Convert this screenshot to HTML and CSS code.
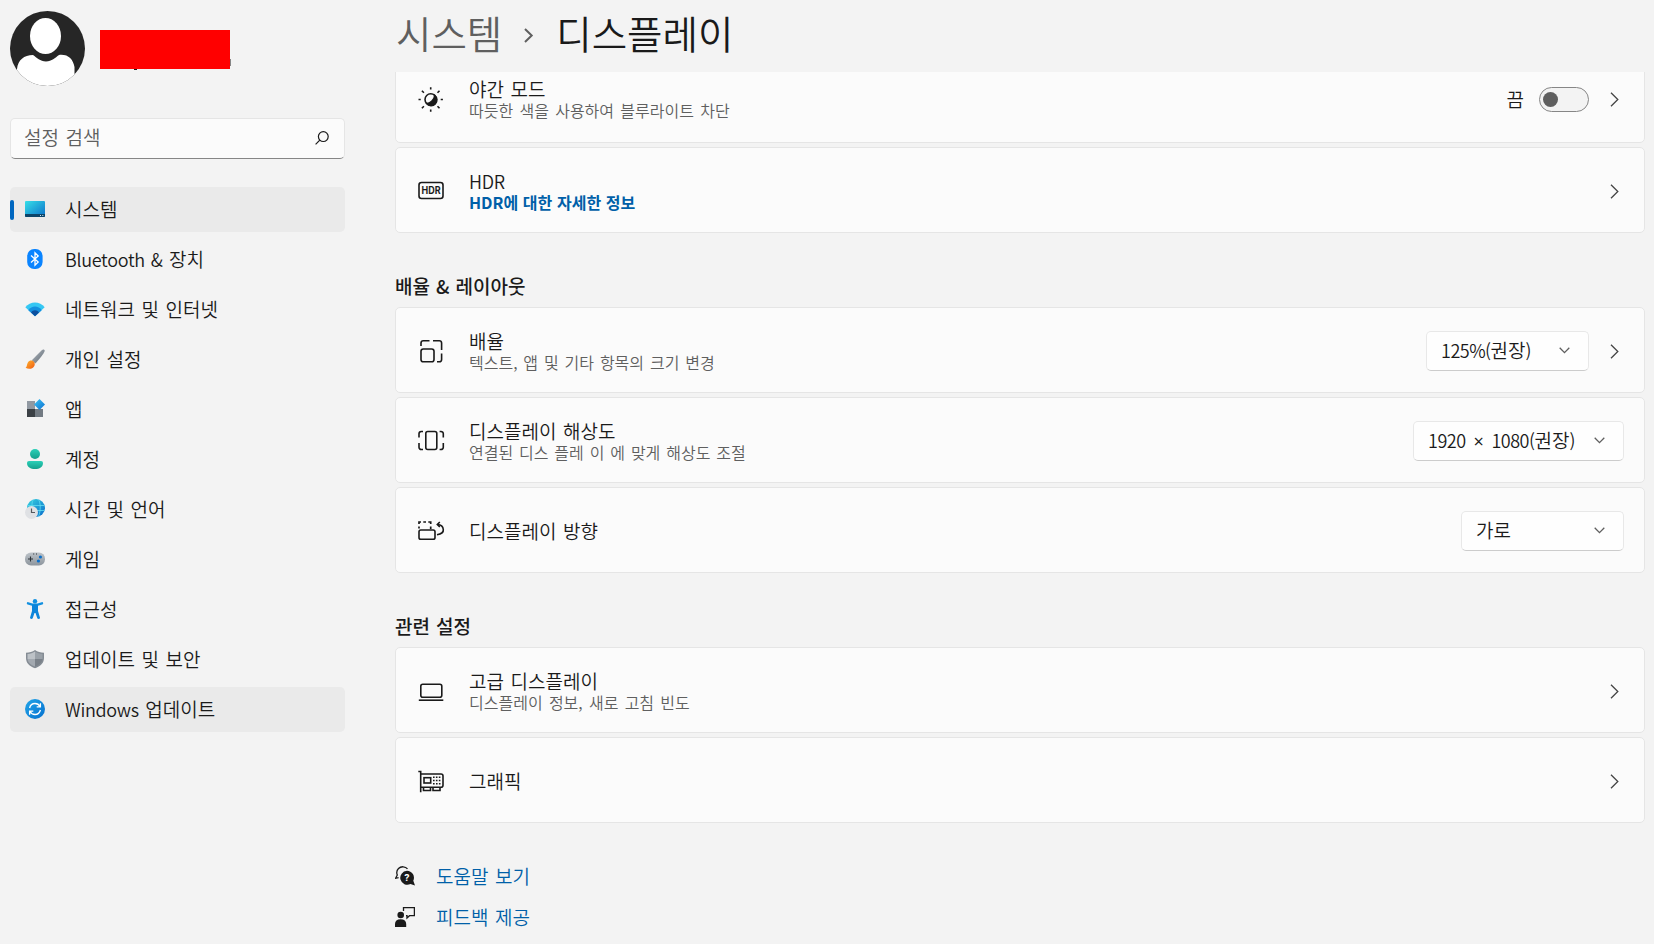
FILE: index.html
```
<!DOCTYPE html>
<html lang="ko">
<head>
    <meta charset="UTF-8">
    <meta name="viewport" content="width=device-width, initial-scale=1.0">
    <title>설정</title>
    <link rel="stylesheet" href="styles.css">
</head>
<body>
    <aside class="sidebar">
        <div class="profile">
            <svg class="avatar" viewBox="0 0 75 75">
                <rect width="75" height="75" fill="#262626"/>
                <ellipse cx="35.5" cy="25" rx="15.5" ry="18" fill="#fff"/>
                <path d="M7 76V58C8 49 14 44 23 44C27 47 30 50 36 50.500C42 50 45 47 49 44C58 43 63 48 64.500 56V63L76 55V76Z" fill="#fff"/>
            </svg>
            <div class="profile-name"></div>
        </div>

        <div class="search">
            <span>설정 검색</span>
            <svg width="14" height="14" viewBox="0 0 14 14" fill="none" stroke="#1a1a1a" stroke-width="1.200"><circle cx="8.300" cy="5.600" r="4.900"/><path d="M4.800 9.200L.6 13.400"/></svg>
        </div>

        <nav class="nav">
            <a class="nav-item active">
                <svg viewBox="0 0 20 20">
                    <defs><linearGradient id="gSys" x1="0" y1="0" x2="1" y2="1"><stop offset="0" stop-color="#36dfe8"/><stop offset="1" stop-color="#0b6fc9"/></linearGradient></defs>
                    <rect y="2" width="20" height="16" rx="1" fill="url(#gSys)"/>
                    <path d="M0 15H20V17A1 1 0 0 1 19 18H1A1 1 0 0 1 0 17Z" fill="#0b4469"/>
                    <path d="M15 16.500h1M17.300 16.500h1" stroke="#cfe8f5"/>
                </svg>
                <span>시스템</span>
            </a>
            <a class="nav-item">
                <svg viewBox="0 0 20 20">
                    <rect x="2.200" width="15.400" height="20" rx="7" fill="#0a84ff"/>
                    <path d="M6 6.400L13.200 13L10 16.200V3.800L13.200 7L6 13.600" fill="none" stroke="#fff" stroke-width="1.300"/>
                </svg>
                <span><span class="latin">Bluetooth &amp;</span> 장치</span>
            </a>
            <a class="nav-item">
                <svg viewBox="0 0 20 20">
                    <path d="M.3 8.300C5 2 15 2 19.700 8.300L10 17.300Z" fill="#35c7f3"/>
                    <path d="M3.300 11.200C6.500 6.300 13.500 6.300 16.700 11.200L10 17.300Z" fill="#1490df"/>
                    <path d="M6 13.600C8 10.600 12 10.600 14 13.600L10 17.300Z" fill="#0b4f9e"/>
                </svg>
                <span>네트워크 및 인터넷</span>
            </a>
            <a class="nav-item">
                <svg viewBox="0 0 20 20">
                    <defs>
                        <linearGradient id="gPen" x1="0" y1="0" x2="1" y2="1"><stop offset="0" stop-color="#b4bcc4"/><stop offset="1" stop-color="#5e6770"/></linearGradient>
                        <linearGradient id="gTip" x1="0" y1="0" x2="1" y2="1"><stop offset="0" stop-color="#ffb52e"/><stop offset="1" stop-color="#ef5a13"/></linearGradient>
                    </defs>
                    <path d="M6.800 11.300L17 .9C18 0 20 .3 19.700 2C19 4.500 14 10.500 10.300 14.500Z" fill="url(#gPen)"/>
                    <path d="M.6 18.800C2.300 17.500 1.700 15.500 3 13.300C4.500 11 7.500 11.200 9 13C10.500 15 9.700 17.600 7.500 19C5.500 20.200 2.500 20.100 .6 18.800Z" fill="url(#gTip)"/>
                </svg>
                <span>개인 설정</span>
            </a>
            <a class="nav-item">
                <svg viewBox="0 0 20 20">
                    <defs><linearGradient id="gApp" x1="0" y1="0" x2="1" y2="1"><stop offset="0" stop-color="#3cc4f5"/><stop offset="1" stop-color="#0b6fcf"/></linearGradient></defs>
                    <path d="M2 2h8v8H2Z" fill="#9199a2"/>
                    <path d="M2 10h8v8H2Z" fill="#3b4045"/>
                    <path d="M10 10h8v8h-8Z" fill="#727a82"/>
                    <path d="M14.500 0L20 5.500L14.500 11L9 5.500Z" fill="url(#gApp)"/>
                </svg>
                <span>앱</span>
            </a>
            <a class="nav-item">
                <svg viewBox="0 0 20 20">
                    <defs><linearGradient id="gAcc" x1="0" y1="0" x2="0" y2="1"><stop offset="0" stop-color="#2bd0b8"/><stop offset="1" stop-color="#14a08c"/></linearGradient></defs>
                    <circle cx="10" cy="5" r="5" fill="url(#gAcc)"/>
                    <path d="M4 12H16A2 2 0 0 1 18 14C18 18 14.500 20 10 20S2 18 2 14A2 2 0 0 1 4 12Z" fill="url(#gAcc)"/>
                </svg>
                <span>계정</span>
            </a>
            <a class="nav-item">
                <svg viewBox="0 0 20 20">
                    <defs><linearGradient id="gTime" x1="0" y1="0" x2="1" y2="1"><stop offset="0" stop-color="#35d2df"/><stop offset="1" stop-color="#0a6ccb"/></linearGradient></defs>
                    <circle cx="11" cy="9" r="9" fill="url(#gTime)"/>
                    <path d="M2.500 6.500H19.500M10 11.500H19.500M8.300 .8C6.800 3 7 5 7 8M13.600 .6C15.700 4 15.800 12 13.600 17.500" fill="none" stroke="#62dcf0" stroke-width=".8"/>
                    <circle cx="6.500" cy="13.500" r="6.500" fill="#dfe1e4"/>
                    <path d="M6.500 9.500V13.500H10" fill="none" stroke="#55595e" stroke-width="1.200"/>
                </svg>
                <span>시간 및 언어</span>
            </a>
            <a class="nav-item">
                <svg viewBox="0 0 20 20">
                    <defs><linearGradient id="gGame" x1="0" y1="0" x2="0" y2="1"><stop offset="0" stop-color="#bcc2c8"/><stop offset="1" stop-color="#8d959d"/></linearGradient></defs>
                    <rect y="3.500" width="20" height="13" rx="6" fill="url(#gGame)"/>
                    <path d="M3 10H8M5.500 7.500V12.500M8.200 5h1M11 5h1" stroke="#2f3439" stroke-width="1.100"/>
                    <circle cx="15.400" cy="8" r="1.600" fill="#0b6fc9"/>
                    <circle cx="13.400" cy="12" r="1.600" fill="#0b6fc9"/>
                </svg>
                <span>게임</span>
            </a>
            <a class="nav-item">
                <svg viewBox="0 0 20 20">
                    <circle cx="10" cy="2.200" r="2.200" fill="#1290e0"/>
                    <path d="M3 4.300L8 5.800H12L17 4.300" fill="none" stroke="#1290e0" stroke-width="2.400" stroke-linecap="round"/>
                    <path d="M7 5.500H13V12L15 18.800C15 20.300 12.700 20.300 12.300 19.200L10.500 14H9.500L7.700 19.200C7.300 20.300 5 20.300 5 18.800L7 12Z" fill="#0d85da"/>
                </svg>
                <span>접근성</span>
            </a>
            <a class="nav-item">
                <svg viewBox="0 0 20 20">
                    <path d="M10 1C12.500 3 15.500 3.700 19 3.700V9C19 14 15.500 17.300 10 19.200C4.500 17.300 1 14 1 9V3.700C4.500 3.700 7.500 3 10 1Z" fill="#858c94"/>
                    <path d="M10 2.600C12.300 4.200 14.500 4.900 17.500 5V10H10Z" fill="#9aa1a8"/>
                    <path d="M10 2.600C7.700 4.200 5.500 4.900 2.500 5V10H10Z" fill="#bdc2c7"/>
                    <path d="M2.500 10H10V17.500C5.500 16 3 13.500 2.500 10Z" fill="#a3a9b0"/>
                    <path d="M17.500 10H10V17.500C14.500 16 17 13.500 17.500 10Z" fill="#7a8189"/>
                </svg>
                <span>업데이트 및 보안</span>
            </a>
            <a class="nav-item hover">
                <svg viewBox="0 0 20 20">
                    <defs><linearGradient id="gUpd" x1="0" y1="0" x2="1" y2="1"><stop offset="0" stop-color="#22a5e8"/><stop offset="1" stop-color="#0570cf"/></linearGradient></defs>
                    <circle cx="10" cy="10" r="10" fill="url(#gUpd)"/>
                    <path d="M4.600 9C5.300 6 7.500 4.500 10 4.500C12 4.500 14 5.500 15 7.500M15.400 11C14.700 14 12.500 15.500 10 15.500C8 15.500 6 14.500 5 12.500M15.400 4.300V7.900H11.700M4.600 15.700V12.100H8.300" fill="none" stroke="#fff" stroke-width="1.300"/>
                </svg>
                <span><span class="latin">Windows</span> 업데이트</span>
            </a>
        </nav>
    </aside>

    <main class="main">
        <header class="breadcrumb">
            <span class="parent">시스템</span>
            <svg width="10" height="15" viewBox="0 0 10 15" fill="none" stroke="#5f5f5f" stroke-width="2"><path d="M1 1L7.700 7.500L1 14"/></svg>
            <h1>디스플레이</h1>
        </header>

        <div class="content">
            <section class="group">
                <div class="card cut">
                    <svg class="icon" viewBox="0 0 28 28">
                        <circle cx="13.700" cy="13.500" r="5.700"/>
                        <path d="M17.700 9.500A5.700 5.700 0 1 1 9.700 17.500C13 17.500 17.700 13.500 17.700 9.500Z" fill="#1a1a1a"/>
                        <path d="M13.700 1.300V3.500M13.700 23.500V25.700M1.500 13.500H3.700M23.700 13.500H25.900M4.900 4.700L6.900 6.700M20.500 20.300L22.500 22.300M22.500 4.700L20.500 6.700M6.900 20.300L4.900 22.300"/>
                    </svg>
                    <div class="text">
                        <div class="title">야간 모드</div>
                        <div class="desc">따듯한 색을 사용하여 블루라이트 차단</div>
                    </div>
                    <span class="toggle-label">끔</span>
                    <div class="toggle"></div>
                    <svg class="arrow" viewBox="0 0 9 15"><path d="M1 .8L7.800 7.500L1 14.200"/></svg>
                </div>
                <div class="card">
                    <svg class="icon" viewBox="0 0 28 28">
                        <rect x="2" y="6.500" width="24" height="16" rx="2.500"/>
                        <text class="hdr" x="14" y="18.300" text-anchor="middle" textLength="19" lengthAdjust="spacingAndGlyphs">HDR</text>
                    </svg>
                    <div class="text">
                        <div class="title"><span class="latin">HDR</span></div>
                        <a class="desc link">HDR에 대한 자세한 정보</a>
                    </div>
                    <svg class="arrow" viewBox="0 0 9 15"><path d="M1 .8L7.800 7.500L1 14.200"/></svg>
                </div>
            </section>

            <h2>배율 &amp; 레이아웃</h2>
            <section class="group">
                <div class="card">
                    <svg class="icon" viewBox="0 0 28 28">
                        <rect x="4" y="13" width="13" height="12.700" rx="2.300"/>
                        <path d="M4 10V7A2.300 2.300 0 0 1 6.300 4.800H12.500M16 4.800H22.300A2.300 2.300 0 0 1 24.600 7V14M24.600 17.500V23.400A2.300 2.300 0 0 1 22.300 25.700H20"/>
                    </svg>
                    <div class="text">
                        <div class="title">배율</div>
                        <div class="desc tight">텍스트, 앱 및 기타 항목의 크기 변경</div>
                    </div>
                    <div class="select gap-arrow"><span><span class="num">125%(</span>권장<span class="num">)</span></span><svg class="down" viewBox="0 0 11 7"><path d="M.7 .8L5.500 5.600L10.300 .8"/></svg></div>
                    <svg class="arrow" viewBox="0 0 9 15"><path d="M1 .8L7.800 7.500L1 14.200"/></svg>
                </div>
                <div class="card">
                    <svg class="icon" viewBox="0 0 28 28">
                        <rect x="8.800" y="5.500" width="11" height="18" rx="2"/>
                        <path d="M6 5.500H4.300A2.300 2.300 0 0 0 2 7.800V11.500M2 17V21.200A2.300 2.300 0 0 0 4.300 23.500H6M22.600 5.500H24A2.300 2.300 0 0 1 26.300 7.800V11.500M26.300 17V21.200A2.300 2.300 0 0 1 24 23.500H22.600"/>
                    </svg>
                    <div class="text">
                        <div class="title">디스플레이 해상도</div>
                        <div class="desc tight">연결된 디스 플레 이 에 맞게 해상도 조절</div>
                    </div>
                    <div class="select wide"><span><span class="num">1920 <span class="times">×</span> 1080(</span>권장<span class="num">)</span></span><svg class="down" viewBox="0 0 11 7"><path d="M.7 .8L5.500 5.600L10.300 .8"/></svg></div>
                </div>
                <div class="card">
                    <svg class="icon" viewBox="0 0 28 28">
                        <rect x="2" y="14" width="16" height="9.300" rx="1.800"/>
                        <path d="M2 12.500V10.500M2 8V6H4M6.300 6H9M11.300 6H13.700V8M13.700 10.500V13" stroke-width="1.700"/>
                        <path d="M20 18.800C24.500 18 26.600 16 26.300 13.500C26 10.500 24 8.700 20.500 8.500M22.800 6L20.300 8.500L22.800 11" />
                    </svg>
                    <div class="text">
                        <div class="title">디스플레이 방향</div>
                    </div>
                    <div class="select"><span>가로</span><svg class="down" viewBox="0 0 11 7"><path d="M.7 .8L5.500 5.600L10.300 .8"/></svg></div>
                </div>
            </section>

            <h2>관련 설정</h2>
            <section class="group">
                <div class="card">
                    <svg class="icon" viewBox="0 0 28 28">
                        <rect x="3.800" y="8.300" width="21" height="13" rx="2"/>
                        <path d="M1.800 24.200H26.300"/>
                    </svg>
                    <div class="text">
                        <div class="title">고급 디스플레이</div>
                        <div class="desc">디스플레이 정보, 새로 고침 빈도</div>
                    </div>
                    <svg class="arrow" viewBox="0 0 9 15"><path d="M1 .8L7.800 7.500L1 14.200"/></svg>
                </div>
                <div class="card">
                    <svg class="icon" viewBox="0 0 28 28">
                        <path d="M1.300 5.500H3.700V26.300M3.700 8H24A2 2 0 0 1 26 10V19.300A2 2 0 0 1 24 21.300H3.700M6.500 21.500V24.500H13.500V21.500M16 21.500V24.500H23V21.500"/>
                        <rect x="7" y="11.700" width="6.700" height="5.300"/>
                        <path d="M16 11.300H24.500M16 14.500H24.500M16 17.700H18M19 17.700H24" stroke-dasharray="1.600 1.300"/>
                    </svg>
                    <div class="text">
                        <div class="title">그래픽</div>
                    </div>
                    <svg class="arrow" viewBox="0 0 9 15"><path d="M1 .8L7.800 7.500L1 14.200"/></svg>
                </div>
            </section>

            <div class="footer-links">
                <a>
                    <svg viewBox="0 0 20 20">
                        <path d="M12.500 2.800C10.500 .3 6 0 3.500 2.500C1.500 4.500 1.500 7 2.300 9L.6 12.300L3.600 11.700" fill="none" stroke="#1a1a1a" stroke-width="1.300"/>
                        <path d="M12 4.800A7 7 0 0 1 18.300 14.800L20 19.500L15.500 18A7 7 0 1 1 12 4.800Z" fill="#1a1a1a"/>
                        <text class="mark" x="12" y="15.300" text-anchor="middle">?</text>
                    </svg>
                    <span>도움말 보기</span>
                </a>
                <a>
                    <svg viewBox="0 0 20 20">
                        <circle cx="5.700" cy="8" r="3.300" fill="#1a1a1a"/>
                        <path d="M0 20V17C0 14 2 12.300 5.600 12.300S11.200 14 11.200 17V20Z" fill="#1a1a1a"/>
                        <path d="M8.500 4V.7H19.400V8.700H14.500L12 11V8.700H11" fill="none" stroke="#1a1a1a" stroke-width="1.300"/>
                    </svg>
                    <span>피드백 제공</span>
                </a>
            </div>
        </div>
    </main>
</body>
</html>
```
FILE: styles.css
```
* {
    box-sizing: border-box;
}

body {
    margin: 0;
    height: 944px;
    display: flex;
    overflow: hidden;
    background-color: #f3f3f3;
    color: #1a1a1a;
    font-family: "Noto Sans CJK KR", sans-serif;
    font-weight: 350;
    font-size: 19px;
    line-height: 22px;
    word-spacing: 1.2px;
}

.latin {
    font-size: 18px;
    letter-spacing: -0.3px;
}

.num {
    font-size: 18px;
    letter-spacing: -0.5px;
    word-spacing: 3.5px;
}

.times {
    font-family: "Open Sans", sans-serif;
    font-weight: 400;
}

/* sidebar */
.sidebar {
    width: 395px;
    padding: 11px 50px 0 10px;
    flex-shrink: 0;
}

.profile {
    display: flex;
    gap: 15px;
    height: 75px;
}

.avatar {
    width: 75px;
    height: 75px;
    border-radius: 50%;
}

.profile-name {
    position: relative;
    width: 130px;
    height: 39px;
    margin-top: 19px;
    background-color: #ff0000;
}

.profile-name::before,
.profile-name::after {
    content: "";
    position: absolute;
}

.profile-name::before {
    left: 34px;
    top: 39px;
    width: 3px;
    height: 1px;
    background-color: #1a1a1a;
}

.profile-name::after {
    left: 130px;
    top: 29px;
    width: 1px;
    height: 7px;
    background-color: #868686;
}

.search {
    display: flex;
    align-items: center;
    justify-content: space-between;
    height: 41px;
    margin-top: 32px;
    padding: 0 15px 2px 13px;
    border: 1px solid #e5e5e5;
    border-bottom-color: #868686;
    border-radius: 5px;
    background-color: #fbfbfb;
    color: #5f5f5f;
}

.search span,
.nav-item > span {
    margin-top: -2px;
}

.nav {
    display: flex;
    flex-direction: column;
    gap: 5px;
    margin-top: 28px;
}

.nav-item {
    display: flex;
    align-items: center;
    gap: 20px;
    height: 45px;
    padding-left: 15px;
    border-radius: 5px;
}

.nav-item svg {
    width: 20px;
    height: 20px;
    margin-top: -1px;
}

.nav-item.active,
.nav-item.hover {
    background-color: #eaeaea;
}

.nav-item.active::before {
    content: "";
    width: 4px;
    height: 20px;
    margin-left: -15px;
    margin-right: -9px;
    border-radius: 2px;
    background-color: #0067c0;
}

/* main */
.main {
    flex: 1;
    display: flex;
    flex-direction: column;
    padding-right: 9px;
}

.breadcrumb {
    display: flex;
    align-items: center;
    height: 72px;
    padding-bottom: 8px;
    padding-left: 1px;
    font-size: 38.5px;
    line-height: 50px;
    flex-shrink: 0;
}

.breadcrumb .parent {
    color: #5f5f5f;
}

.breadcrumb svg {
    margin: 6px 22px 0 22px;
}

.breadcrumb h1 {
    margin: 0;
    font-size: 38.5px;
    font-weight: 350;
}

.content {
    height: 872px;
    overflow: hidden;
}

.group {
    display: flex;
    flex-direction: column;
    gap: 4px;
}

.content > .group:first-child {
    margin-top: -15px;
}

h2 {
    margin: 0;
    height: 74px;
    padding-top: 42px;
    font-size: 19px;
    font-weight: 500;
    line-height: 22px;
    word-spacing: 0.8px;
}

.card {
    display: flex;
    align-items: center;
    height: 86px;
    padding: 0 20px 0 21px;
    border: 1px solid #e5e5e5;
    border-radius: 5px;
    background-color: #fbfbfb;
}

.card > * {
    margin-top: 2px;
}

.card.cut > * {
    margin-top: -2px;
}

.card > .icon {
    width: 28px;
    height: 28px;
    margin-top: 0;
    margin-right: 24px;
    fill: none;
    stroke: #1a1a1a;
    stroke-width: 1.6;
}

.hdr {
    font-family: Inter, sans-serif;
    font-size: 10.5px;
    font-weight: 700;
    fill: #1a1a1a;
    stroke: none;
}

.text {
    flex: 1;
}

.desc {
    display: block;
    font-size: 16px;
    line-height: 21px;
    color: #5f5f5f;
    word-spacing: 1.8px;
}

.desc.tight {
    word-spacing: 1.4px;
}

.link {
    color: #005fa8;
    font-weight: 700;
    word-spacing: 0.2px;
}

.toggle-label {
    margin-right: 15px;
}

.toggle {
    width: 50px;
    height: 25px;
    padding: 4px 3px;
    margin-right: 21px;
    border: 1px solid #868686;
    border-radius: 13px;
    background-color: #f3f3f3;
}

.toggle::before {
    content: "";
    display: block;
    width: 15px;
    height: 15px;
    border-radius: 50%;
    background-color: #5f5f5f;
}

.arrow {
    width: 9px;
    height: 15px;
    margin-right: 5px;
    fill: none;
    stroke: #444;
    stroke-width: 1.3;
}

.select {
    display: flex;
    align-items: center;
    justify-content: space-between;
    width: 163px;
    height: 40px;
    padding: 0 18px 2px 14px;
    border: 1px solid #e8e8e8;
    border-bottom-color: #cccccc;
    border-radius: 5px;
    background-color: #fefefe;
}

.select.wide {
    width: 211px;
}

.select.gap-arrow {
    margin-right: 21px;
}

.down {
    width: 11px;
    height: 7px;
    fill: none;
    stroke: #5f5f5f;
    stroke-width: 1.3;
}

.footer-links {
    display: flex;
    flex-direction: column;
    gap: 19px;
    margin-top: 42px;
}

.footer-links a {
    display: flex;
    align-items: center;
    gap: 21px;
    color: #005fa8;
}

.footer-links svg {
    width: 20px;
    height: 20px;
}

.mark {
    font-family: Inter, sans-serif;
    font-size: 9.5px;
    font-weight: 700;
    fill: #fff;
}
```
